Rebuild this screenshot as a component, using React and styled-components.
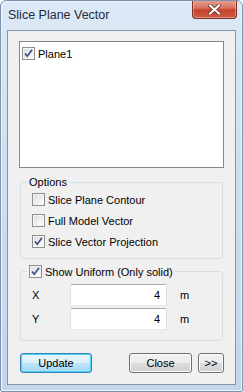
import React from 'react';
import styled, { createGlobalStyle } from 'styled-components';

const GlobalStyle = createGlobalStyle`
  html, body {
    margin: 0;
    padding: 0;
    background: #ffffff;
  }
  body {
    font-family: "Liberation Sans", Arial, sans-serif;
    font-size: 11px;
    color: #000;
  }
`;

const Window = styled.div`
  width: 243px;
  height: 392px;
  box-sizing: border-box;
  display: flex;
  flex-direction: column;
  border: 1px solid #7b95b0;
  border-radius: 6px 6px 2px 2px;
  background: linear-gradient(180deg, #dce9f6 0%, #cfdfef 40%, #c3d6ea 100%);
  box-shadow: inset 0 0 0 1px #eef4fb;
  overflow: hidden;
`;

const TitleBar = styled.div`
  height: 29px;
  flex: none;
  display: flex;
  align-items: flex-start;
  justify-content: space-between;
  padding: 0 5px 0 7px;
`;

const Title = styled.span`
  margin-top: 7px;
  font-family: "Liberation Sans", Arial, sans-serif;
  font-size: 12.5px;
  color: #1e2b3a;
`;

const CloseButton = styled.div`
  width: 45px;
  height: 19px;
  margin-top: -1px;
  box-sizing: border-box;
  border: 1px solid #7a2e24;
  border-top: none;
  border-radius: 0 0 4px 4px;
  background: linear-gradient(180deg, #e8a396 0%, #d9705f 45%, #c5412c 55%, #cf5a40 100%);
  box-shadow: inset 0 0 0 1px rgba(255, 255, 255, 0.35);
  display: flex;
  align-items: center;
  justify-content: center;
`;

const Client = styled.div`
  flex: 1;
  margin: 0 6px 6px 6px;
  box-sizing: border-box;
  border: 1px solid #8196ad;
  background: #f0f0f0;
  padding: 10px 11px 0 11px;
  display: flex;
  flex-direction: column;
`;

const ListBox = styled.div`
  height: 127px;
  box-sizing: border-box;
  border: 1px solid #828790;
  background: #ffffff;
  padding: 5px 2px;
`;

const ListItem = styled.label`
  display: flex;
  align-items: center;
  gap: 3px;
  font-size: 11px;
`;

const Box = styled.span`
  width: 13px;
  height: 13px;
  box-sizing: border-box;
  flex: none;
  border: 1px solid #8e8f8f;
  background: linear-gradient(135deg, #dcdcdc 0%, #f4f4f4 70%, #ffffff 100%);
  box-shadow: inset 0 0 0 1px #f6f6f6;
  display: flex;
  align-items: center;
  justify-content: center;
`;

const CheckBox = ({ checked }) => (
  <Box>
    {checked && (
      <svg width="9" height="9" viewBox="0 0 9 9">
        <path d="M1 4.5 L3.3 7.2 L8 0.8" fill="none" stroke="#3b4f8c" strokeWidth="1.7" />
      </svg>
    )}
  </Box>
);

const Group = styled.fieldset`
  margin: 0;
  margin-top: ${({ $top }) => $top}px;
  margin-left: 1px;
  margin-right: 1px;
  height: ${({ $height }) => $height}px;
  box-sizing: border-box;
  border: 1px solid #d5dfe5;
  border-radius: 3px;
  padding: ${({ $pad }) => $pad || 0}px 0 0 11px;
  min-width: 0;
`;

const Legend = styled.legend`
  padding: 0 2px;
  margin-left: -5px;
  font-size: 11px;
  display: flex;
  align-items: center;
  gap: 3px;
`;

const Option = styled.label`
  display: flex;
  align-items: center;
  gap: 3px;
  height: 21px;
  font-size: 11px;
`;

const FieldRow = styled.div`
  display: grid;
  grid-template-columns: 38px 97px auto;
  align-items: center;
  height: 24px;
  font-size: 11px;
`;

const NumberInput = styled.div`
  height: 22px;
  box-sizing: border-box;
  border: 1px solid #abadb3;
  border-left-color: #e2e3ea;
  border-right-color: #dbdfe6;
  border-bottom-color: #e3e9ef;
  border-radius: 2px;
  background: #fff;
  text-align: right;
  padding-right: 6px;
  line-height: 20px;
  font-size: 11px;
`;

const Unit = styled.span`
  padding-left: 13px;
`;

const ButtonRow = styled.div`
  display: flex;
  align-items: center;
  margin-top: 12px;
  padding-left: 1px;
`;

const Button = styled.div`
  width: ${({ $w }) => $w}px;
  height: 20px;
  box-sizing: border-box;
  margin-left: ${({ $ml }) => $ml || 0}px;
  border: 1px solid ${({ $default }) => ($default ? '#3c7fb1' : '#707070')};
  border-radius: 3px;
  background: ${({ $default }) =>
    $default
      ? 'linear-gradient(180deg, #eaf6fd 0%, #d9f0fc 50%, #bee6fd 50%, #a7d9f5 100%)'
      : 'linear-gradient(180deg, #f2f2f2 0%, #ebebeb 50%, #dddddd 50%, #cfcfcf 100%)'};
  box-shadow: inset 0 0 0 1px ${({ $default }) => ($default ? '#48d3fb' : '#fcfcfc')};
  display: flex;
  align-items: center;
  justify-content: center;
  font-size: 11px;
`;

const Spacer = styled.div`
  flex: 1;
`;

export default function App() {
  return (
    <>
      <GlobalStyle />
      <Window>
        <TitleBar>
          <Title>Slice Plane Vector</Title>
          <CloseButton>
            <svg width="13" height="11" viewBox="0 0 13 11">
              <path
                d="M2 1.5 L11 9.5 M11 1.5 L2 9.5"
                stroke="#5a2a22"
                strokeWidth="3.6"
                strokeLinecap="square"
              />
              <path
                d="M2 1.5 L11 9.5 M11 1.5 L2 9.5"
                stroke="#ffffff"
                strokeWidth="2.2"
                strokeLinecap="square"
              />
            </svg>
          </CloseButton>
        </TitleBar>
        <Client>
          <ListBox>
            <ListItem>
              <CheckBox checked />
              Plane1
            </ListItem>
          </ListBox>

          <Group $top={8} $height={83} $pad={1}>
            <Legend>Options</Legend>
            <Option>
              <CheckBox />
              Slice Plane Contour
            </Option>
            <Option>
              <CheckBox />
              Full Model Vector
            </Option>
            <Option>
              <CheckBox checked />
              Slice Vector Projection
            </Option>
          </Group>

          <Group $top={6} $height={76} $pad={5}>
            <Legend>
              <CheckBox checked />
              Show Uniform (Only solid)
            </Legend>
            <FieldRow>
              <span>X</span>
              <NumberInput>4</NumberInput>
              <Unit>m</Unit>
            </FieldRow>
            <FieldRow>
              <span>Y</span>
              <NumberInput>4</NumberInput>
              <Unit>m</Unit>
            </FieldRow>
          </Group>

          <ButtonRow>
            <Button $w={72} $default>
              Update
            </Button>
            <Spacer />
            <Button $w={63}>Close</Button>
            <Button $w={26} $ml={6}>
              &gt;&gt;
            </Button>
          </ButtonRow>
        </Client>
      </Window>
    </>
  );
}
